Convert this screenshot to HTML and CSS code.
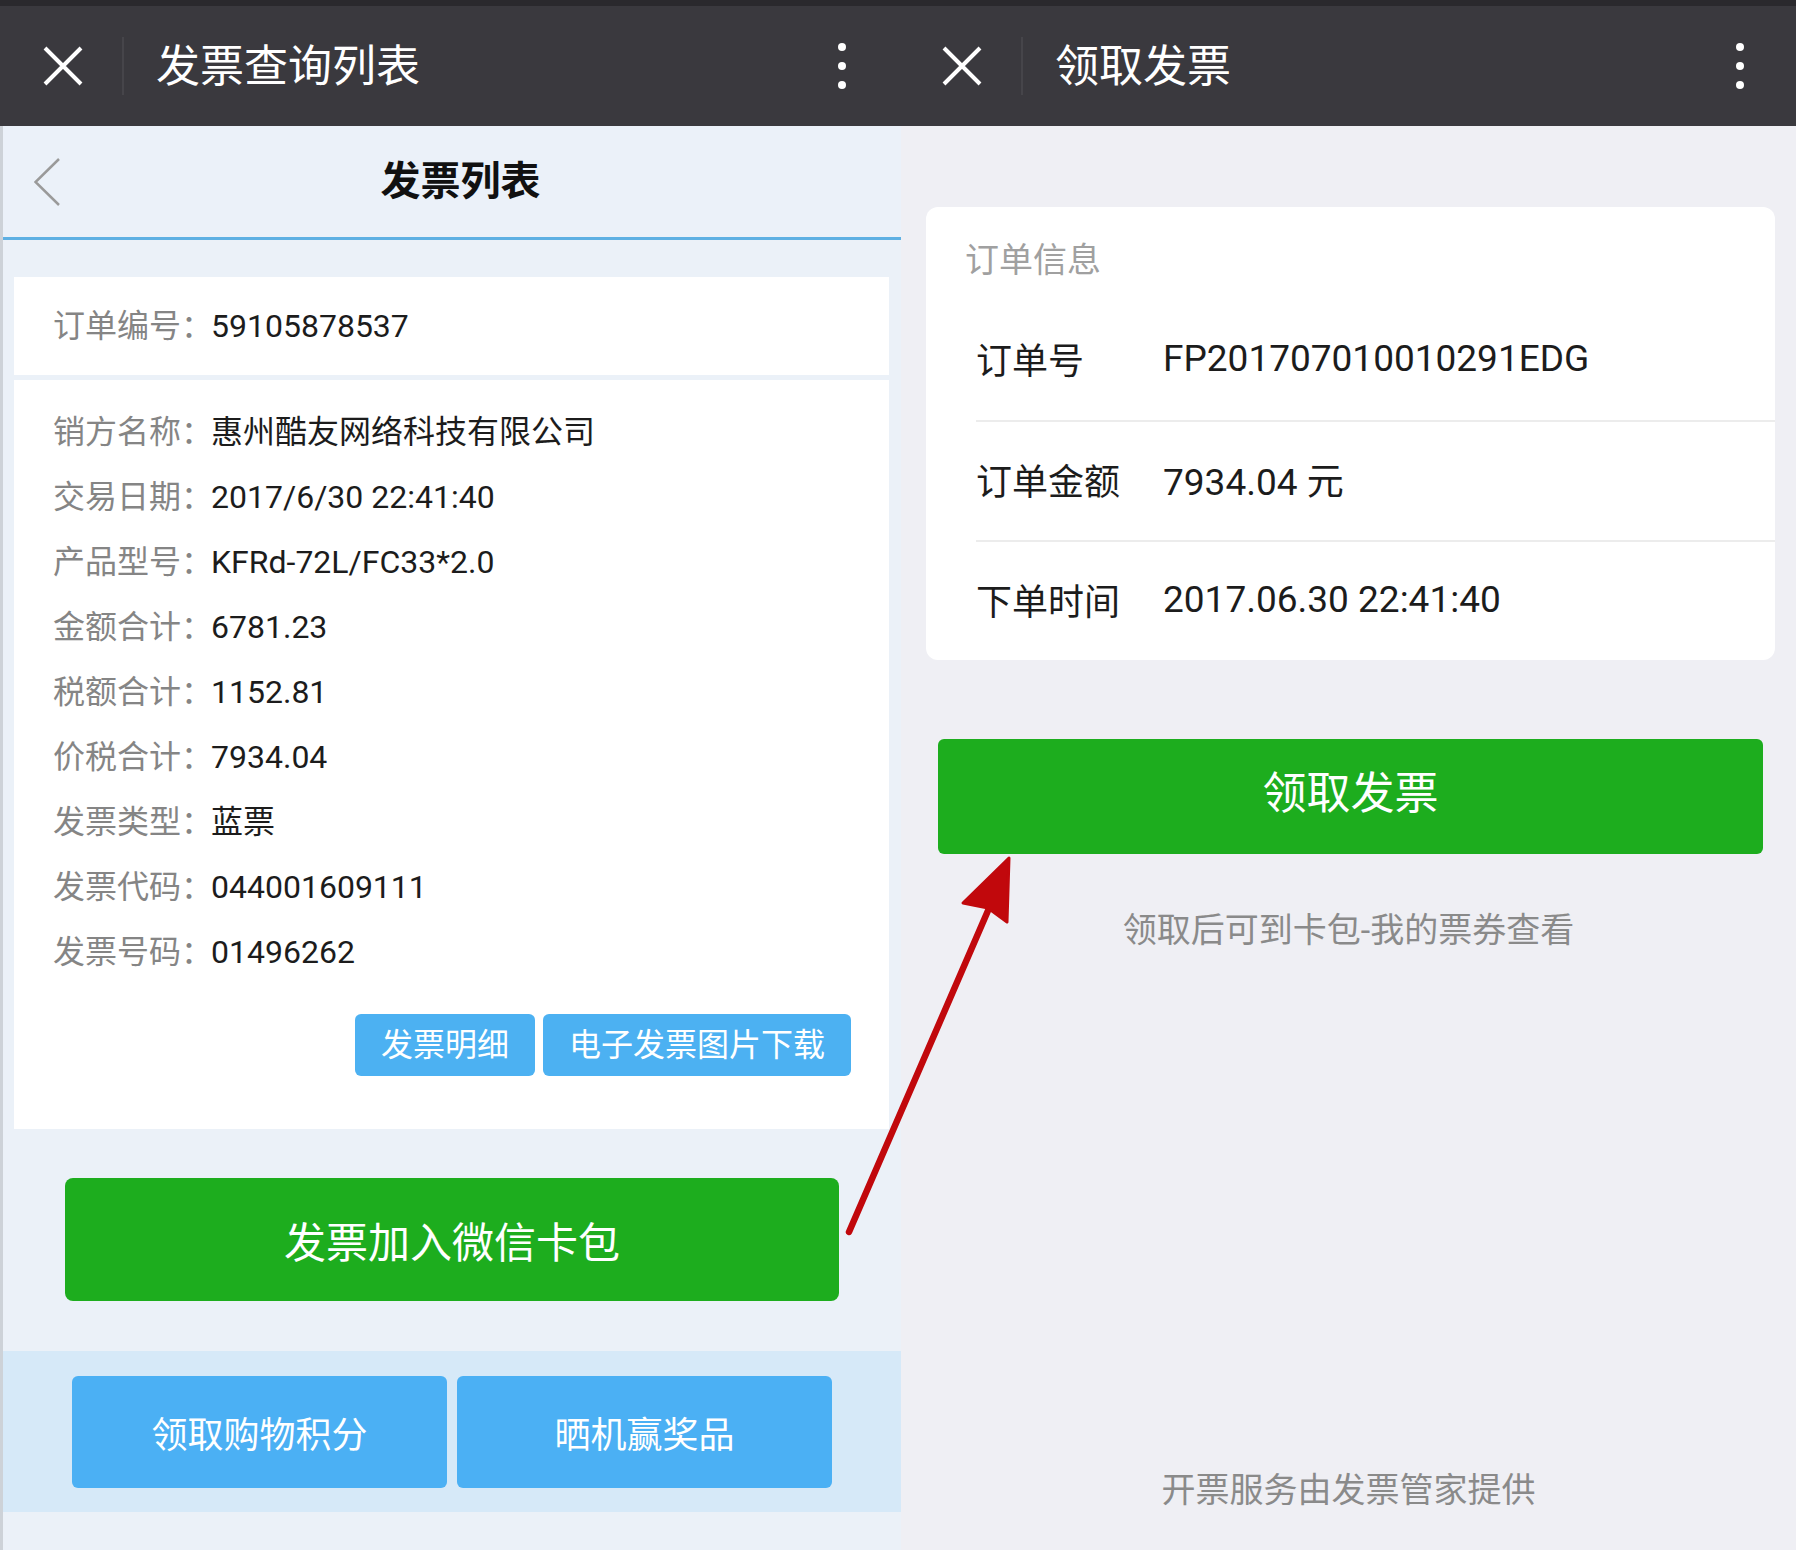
FILE: index.html
```html
<!DOCTYPE html>
<html lang="zh-CN">
<head>
<meta charset="utf-8">
<title>发票查询列表 / 领取发票</title>
<link rel="stylesheet" href="styles.css">
</head>
<body>
<div class="screen">
  <section class="panel panel-left">
    <header class="topbar">
      <svg class="close-icon" viewBox="0 0 40 40" width="40" height="40"><path d="M2 2 L38 38 M38 2 L2 38" stroke="#fff" stroke-width="4" fill="none"/></svg>
      <span class="topbar-sep"></span>
      <h1 class="topbar-title">发票查询列表</h1>
      <span class="more-dots"><i></i><i></i><i></i></span>
    </header>
    <div class="left-body">
      <div class="subheader">
        <svg class="back-icon" viewBox="0 0 26 48" width="26" height="48"><path d="M25 1 L1.5 24 L25 47" stroke="#9a9a9a" stroke-width="2.5" fill="none"/></svg>
        <h2 class="subheader-title">发票列表</h2>
      </div>
      <div class="left-content">
        <div class="card order-card">
          <div class="field"><span class="field-label">订单编号：</span><span class="field-value">59105878537</span></div>
        </div>
        <div class="card invoice-card">
          <div class="field"><span class="field-label">销方名称：</span><span class="field-value">惠州酷友网络科技有限公司</span></div>
          <div class="field"><span class="field-label">交易日期：</span><span class="field-value">2017/6/30 22:41:40</span></div>
          <div class="field"><span class="field-label">产品型号：</span><span class="field-value">KFRd-72L/FC33*2.0</span></div>
          <div class="field"><span class="field-label">金额合计：</span><span class="field-value">6781.23</span></div>
          <div class="field"><span class="field-label">税额合计：</span><span class="field-value">1152.81</span></div>
          <div class="field"><span class="field-label">价税合计：</span><span class="field-value">7934.04</span></div>
          <div class="field"><span class="field-label">发票类型：</span><span class="field-value">蓝票</span></div>
          <div class="field"><span class="field-label">发票代码：</span><span class="field-value">044001609111</span></div>
          <div class="field"><span class="field-label">发票号码：</span><span class="field-value">01496262</span></div>
          <div class="card-actions">
            <button class="btn-blue-sm">发票明细</button>
            <button class="btn-blue-sm">电子发票图片下载</button>
          </div>
        </div>
        <div class="add-wrap"><button class="btn-green btn-add">发票加入微信卡包</button></div>
        <div class="promo-band">
          <button class="btn-promo">领取购物积分</button>
          <button class="btn-promo">晒机赢奖品</button>
        </div>
      </div>
    </div>
  </section>

  <section class="panel panel-right">
    <header class="topbar topbar-right">
      <svg class="close-icon" viewBox="0 0 40 40" width="40" height="40"><path d="M2 2 L38 38 M38 2 L2 38" stroke="#fff" stroke-width="4" fill="none"/></svg>
      <span class="topbar-sep"></span>
      <h1 class="topbar-title">领取发票</h1>
      <span class="more-dots"><i></i><i></i><i></i></span>
    </header>
    <div class="right-body">
      <div class="order-info">
        <div class="order-info-title">订单信息</div>
        <div class="info-row"><span class="info-label">订单号</span><span class="info-value">FP201707010010291EDG</span></div>
        <div class="info-row"><span class="info-label">订单金额</span><span class="info-value">7934.04 元</span></div>
        <div class="info-row"><span class="info-label">下单时间</span><span class="info-value">2017.06.30 22:41:40</span></div>
      </div>
      <button class="btn-green btn-claim">领取发票</button>
      <p class="claim-tip">领取后可到卡包-我的票券查看</p>
      <p class="service-note">开票服务由发票管家提供</p>
    </div>
  </section>

  <svg class="annotation-arrow" viewBox="0 0 1796 1550" width="1796" height="1550">
    <path d="M849 1232 L990 906" stroke="#c1080c" stroke-width="6.5" stroke-linecap="round" fill="none"/>
    <polygon points="1009,858 963,903 988,908 1007,922" fill="#c1080c" stroke="#c1080c" stroke-width="3" stroke-linejoin="round"/>
  </svg>
</div>
</body>
</html>
```

FILE: styles.css
```css
* {
  box-sizing: border-box;
}

html, body {
  margin: 0;
  padding: 0;
}

body {
  width: 1796px;
  height: 1550px;
  overflow: hidden;
  font-family: Roboto, "Noto Sans CJK SC", sans-serif;
  background: #efeff4;
}

.screen {
  position: relative;
  display: flex;
  width: 1796px;
  height: 1550px;
}

.panel {
  display: flex;
  flex-direction: column;
  height: 1550px;
}

.panel-left {
  width: 901px;
  flex: none;
  background: #ebf1f8;
}

.panel-right {
  flex: 1;
  background: #efeff4;
}

/* ---------- top bar ---------- */
.topbar {
  display: flex;
  align-items: center;
  height: 126px;
  border-top: 6px solid #2a292d;
  background: #3a393e;
  padding-left: 43px;
  padding-right: 55px;
  flex: none;
}

.topbar-right {
  padding-left: 41px;
  padding-right: 52px;
}

.close-icon {
  display: block;
  flex: none;
}

.topbar-sep {
  width: 2px;
  height: 58px;
  margin-left: 39px;
  background: #46454a;
}

.topbar-title {
  margin: 2px 0 0 32px;
  font-size: 44px;
  font-weight: normal;
  color: #ffffff;
  line-height: 1;
  letter-spacing: 0;
}

.more-dots {
  margin-left: auto;
  display: flex;
  flex-direction: column;
  gap: 11px;
}

.more-dots i {
  display: block;
  width: 8px;
  height: 8px;
  border-radius: 50%;
  background: #ffffff;
}

/* ---------- left body ---------- */
.left-body {
  flex: 1;
  display: flex;
  flex-direction: column;
  border-left: 3px solid #cdd2d8;
}

.subheader {
  display: flex;
  align-items: center;
  height: 114px;
  padding-left: 31px;
  padding-right: 40px;
  background: #ebf1f9;
  border-bottom: 3px solid #5eb0e3;
}

.back-icon {
  display: block;
  flex: none;
}

.subheader-title {
  flex: 1;
  margin: 0;
  text-align: center;
  font-size: 40px;
  font-weight: bold;
  color: #111111;
  line-height: 1;
}

.left-content {
  flex: 1;
  display: flex;
  flex-direction: column;
  padding-top: 37px;
  background: #ebf1f8;
}

.card {
  background: #ffffff;
  margin: 0 12px 0 11px;
}

.order-card {
  padding: 29px 39px;
}

.invoice-card {
  margin-top: 5px;
  padding: 20px 38px 53px 39px;
}

.field {
  display: flex;
  font-size: 32px;
  line-height: 40px;
  white-space: nowrap;
}

.invoice-card .field {
  line-height: 65px;
}

.field-label {
  flex: none;
  width: 158px;
  overflow: visible;
  white-space: nowrap;
  color: #858585;
}

.field-value {
  color: #1c1c1c;
}

.card-actions {
  display: flex;
  justify-content: flex-end;
  gap: 8px;
  margin-top: 29px;
}

.btn-blue-sm {
  height: 62px;
  padding: 0 26px;
  border: none;
  border-radius: 6px;
  background: #4cb1f2;
  color: #ffffff;
  font-family: inherit;
  font-size: 32px;
  line-height: 62px;
  white-space: nowrap;
}

.btn-green {
  display: block;
  border: none;
  background: #1dad1e;
  color: #ffffff;
  font-family: inherit;
  text-align: center;
}

.add-wrap {
  padding: 49px 62px 0;
}

.btn-add {
  width: 100%;
  height: 123px;
  border-radius: 8px;
  font-size: 42px;
}

.promo-band {
  display: flex;
  gap: 10px;
  margin-top: 50px;
  padding: 25px 69px 24px;
  background: #d6e9f8;
}

.btn-promo {
  flex: 1;
  height: 112px;
  border: none;
  border-radius: 6px;
  background: #4bb0f4;
  color: #ffffff;
  font-family: inherit;
  font-size: 36px;
}

/* ---------- right body ---------- */
.right-body {
  flex: 1;
  display: flex;
  flex-direction: column;
}

.order-info {
  margin: 81px 21px 0 25px;
  background: #ffffff;
  border-radius: 12px;
}

.order-info-title {
  padding: 34px 0 21px 39px;
  font-size: 34px;
  line-height: 38px;
  color: #a0a0a0;
}

.info-row {
  display: flex;
  align-items: center;
  height: 120px;
  margin-left: 50px;
  padding-bottom: 4px;
  border-top: 2px solid #ececec;
  font-size: 36px;
  color: #1c1c1c;
}

.order-info-title + .info-row {
  border-top: none;
}

.info-label {
  width: 187px;
  flex: none;
}

.info-value {
  font-size: 37px;
}

.btn-claim {
  margin: 79px 33px 0 37px;
  height: 115px;
  padding-bottom: 14px;
  border-radius: 6px;
  font-size: 44px;
}

.claim-tip {
  margin: 56px 0 0;
  text-align: center;
  font-size: 34px;
  line-height: 40px;
  color: #8a8a8a;
}

.service-note {
  margin: auto 0 0;
  padding-bottom: 40px;
  text-align: center;
  font-size: 34px;
  line-height: 40px;
  color: #8a8a8a;
}

/* ---------- annotation ---------- */
.annotation-arrow {
  position: absolute;
  left: 0;
  top: 0;
  pointer-events: none;
}
```
